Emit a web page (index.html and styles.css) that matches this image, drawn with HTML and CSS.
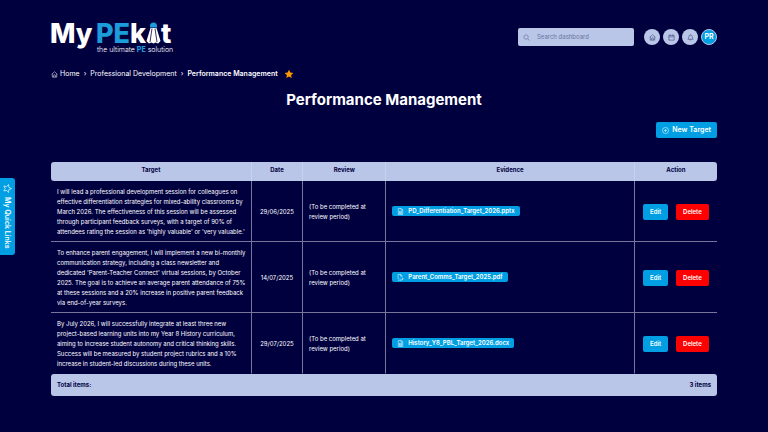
FILE: index.html
```html
<!DOCTYPE html>
<html lang="en">
<head>
    <meta charset="UTF-8">
    <meta name="viewport" content="width=device-width, initial-scale=1.0">
    <title>MyPEkit - Performance Management</title>
    <link rel="stylesheet" href="styles.css">
</head>
<body>
    <!-- Icons shared by the page -->
    <svg class="sprite" aria-hidden="true">
        <symbol id="icon-home" viewBox="0 0 16 16">
            <path d="M1.5 7.5 8 1.8l6.500 5.700M3 6.500V14h10V6.500M6 14v-3.500a2 2 0 0 1 4 0V14"/>
        </symbol>
        <symbol id="icon-star" viewBox="0 0 16 16">
            <path d="M8 1l2.100 4.600 5 .6-3.700 3.400 1 4.900L8 12.100l-4.400 2.400 1-4.900L.9 6.200l5-.6z"/>
        </symbol>
        <symbol id="icon-file" viewBox="0 0 16 16">
            <path d="M3 1h6.500L13 4.500V15H3zM9.500 1v3.500H13M5.500 7.500h5v5h-5zM5.500 10h5"/>
        </symbol>
        <symbol id="icon-pdf" viewBox="0 0 16 16">
            <path d="M2.500 12V1H8l3.500 3.500V8M8 1v3.500h3.500M2.500 14.500h3M7 10.500v4M7 14.500h3M11.500 14.500v-4H15M11.500 12.500H14"/>
        </symbol>
    </svg>

    <a href="#" class="quick-links">
        <svg class="icon"><use href="#icon-star"/></svg>
        <span>My Quick Links</span>
    </a>

    <div class="page">
        <header class="topbar">
            <a href="#" class="logo" aria-label="MyPEkit home">
                <svg viewBox="0 0 122 32" class="logo-img">
                    <text x="-1" y="20" class="logo-name">My</text>
                    <text x="45" y="20" class="logo-name logo-blue">PE</text>
                    <text x="79" y="20" class="logo-name">k</text>
                    <text x="110" y="20" class="logo-name">t</text>
                    <path class="logo-blue" d="M99 3a3.500 3.500 0 0 1 7 0v1.500h-7z"/>
                    <path class="logo-white" d="M99.500 5h6l4 13-2.500 2.500-2.200-1-2.300 1-2.300-1-2.200 1-2.500-2.500z"/>
                    <path class="logo-lines" d="M101 5.500 99 19M104 5.500 106 19"/>
                    <text x="46" y="29" class="logo-tagline">the ultimate <tspan class="logo-blue logo-pe">PE</tspan> solution</text>
                </svg>
            </a>
            <div class="tools">
                <label class="search">
                    <svg class="icon" viewBox="0 0 16 16"><circle cx="7" cy="7" r="5"/><path d="M11 11l4 4"/></svg>
                    <input type="search" placeholder="Search dashboard" aria-label="Search dashboard">
                </label>
                <button type="button" class="round-btn" aria-label="Home">
                    <svg class="icon"><use href="#icon-home"/></svg>
                </button>
                <button type="button" class="round-btn" aria-label="Calendar">
                    <svg class="icon" viewBox="0 0 16 16"><path d="M2 3h12v11H2zM2 6.500h12M5 1v3.500M11 1v3.500"/></svg>
                </button>
                <button type="button" class="round-btn" aria-label="Notifications">
                    <svg class="icon" viewBox="0 0 16 16"><path d="M2 12c1.500-1.500 2-3 2-5.500a4 4 0 0 1 8 0c0 2.500.5 4 2 5.500zM6.500 12.500a1.500 1.500 0 0 0 3 0M8 1v1.500"/></svg>
                </button>
                <button type="button" class="round-btn avatar">PR</button>
            </div>
        </header>

        <nav class="breadcrumb" aria-label="Breadcrumb">
            <a href="#" class="home-link"><svg class="icon"><use href="#icon-home"/></svg>Home</a>
            <span class="sep">›</span>
            <a href="#">Professional Development</a>
            <span class="sep">›</span>
            <strong>Performance Management</strong>
            <svg class="icon favourite"><use href="#icon-star"/></svg>
        </nav>

        <h1>Performance Management</h1>

        <div class="actions-bar">
            <button type="button" class="btn btn-new">
                <svg class="icon" viewBox="0 0 16 16"><circle cx="8" cy="8" r="7"/><path d="M8 4.500v7M4.500 8h7"/></svg>
                New Target
            </button>
        </div>

        <table class="targets">
            <colgroup>
                <col class="col-target">
                <col class="col-date">
                <col class="col-review">
                <col class="col-evidence">
                <col class="col-action">
            </colgroup>
            <thead>
                <tr>
                    <th>Target</th>
                    <th>Date</th>
                    <th>Review</th>
                    <th>Evidence</th>
                    <th>Action</th>
                </tr>
            </thead>
            <tbody>
                <tr>
                    <td>I will lead a professional development session for colleagues on<br>
                        effective differentiation strategies for mixed-ability classrooms by<br>
                        March 2026. The effectiveness of this session will be assessed<br>
                        through participant feedback surveys, with a target of 90% of<br>
                        attendees rating the session as 'highly valuable' or 'very valuable.'</td>
                    <td class="date">29/06/2025</td>
                    <td>(To be completed at<br>review period)</td>
                    <td><a href="#" class="file"><svg class="icon"><use href="#icon-file"/></svg>PD_Differentiation_Target_2026.pptx</a></td>
                    <td>
                        <div class="row-actions">
                            <button type="button" class="btn">Edit</button>
                            <button type="button" class="btn btn-delete">Delete</button>
                        </div>
                    </td>
                </tr>
                <tr>
                    <td>To enhance parent engagement, I will implement a new bi-monthly<br>
                        communication strategy, including a class newsletter and<br>
                        dedicated 'Parent-Teacher Connect' virtual sessions, by October<br>
                        2025. The goal is to achieve an average parent attendance of 75%<br>
                        at these sessions and a 20% increase in positive parent feedback<br>
                        via end-of-year surveys.</td>
                    <td class="date">14/07/2025</td>
                    <td>(To be completed at<br>review period)</td>
                    <td><a href="#" class="file"><svg class="icon"><use href="#icon-pdf"/></svg>Parent_Comms_Target_2025.pdf</a></td>
                    <td>
                        <div class="row-actions">
                            <button type="button" class="btn">Edit</button>
                            <button type="button" class="btn btn-delete">Delete</button>
                        </div>
                    </td>
                </tr>
                <tr>
                    <td>By July 2026, I will successfully integrate at least three new<br>
                        project-based learning units into my Year 8 History curriculum,<br>
                        aiming to increase student autonomy and critical thinking skills.<br>
                        Success will be measured by student project rubrics and a 10%<br>
                        increase in student-led discussions during these units.</td>
                    <td class="date">29/07/2025</td>
                    <td>(To be completed at<br>review period)</td>
                    <td><a href="#" class="file"><svg class="icon"><use href="#icon-file"/></svg>History_Y8_PBL_Target_2026.docx</a></td>
                    <td>
                        <div class="row-actions">
                            <button type="button" class="btn">Edit</button>
                            <button type="button" class="btn btn-delete">Delete</button>
                        </div>
                    </td>
                </tr>
            </tbody>
            <tfoot>
                <tr>
                    <td colspan="4">Total items:</td>
                    <td class="count">3 items</td>
                </tr>
            </tfoot>
        </table>
    </div>
</body>
</html>
```
FILE: styles.css
```css
:root {
    --navy: #01003f;
    --pale: #b9c6e8;
    --blue: #009fe3;
    --line: #77769a;
}

* {
    box-sizing: border-box;
}

body {
    margin: 0;
    background: var(--navy);
    color: #fff;
    font-family: Inter, "Open Sans", sans-serif;
    font-size: 6px;
    line-height: 10px;
}

a {
    color: inherit;
    text-decoration: none;
}

button,
input {
    font: inherit;
    color: inherit;
    border: 0;
    padding: 0;
}

.sprite {
    display: none;
}

.icon {
    width: 7px;
    height: 7px;
    flex: none;
    fill: none;
    stroke: currentColor;
    stroke-width: 1.2;
    stroke-linejoin: round;
}

.page {
    padding: 23px 51px;
}

/* Side tab */
.quick-links {
    position: fixed;
    left: 0;
    top: 178px;
    display: flex;
    align-items: center;
    gap: 4px;
    padding: 6px 3px 6px 2px;
    border-radius: 0 3px 3px 0;
    background: var(--blue);
    font-size: 7px;
    font-weight: 600;
    writing-mode: vertical-rl;
}

.quick-links .icon {
    width: 9px;
    height: 9px;
    transform: rotate(90deg);
}

/* Header */
.topbar {
    display: flex;
    justify-content: space-between;
}

.logo-img {
    display: block;
    width: 122px;
    height: 32px;
    overflow: visible;
    fill: #fff;
}

.logo-name {
    font-size: 27px;
    font-weight: 800;
}

.logo-tagline {
    font-size: 7px;
    font-weight: 300;
}

.logo-pe {
    font-weight: 800;
}

.logo-blue {
    fill: #1b9ddb;
}

.logo-lines {
    fill: none;
    stroke: var(--navy);
    stroke-width: 0.8;
}

.tools {
    display: flex;
    align-items: center;
    gap: 3px;
    height: 28px;
}

.search {
    display: flex;
    align-items: center;
    gap: 7px;
    width: 116px;
    height: 18px;
    margin-right: 7px;
    padding: 0 5px;
    border-radius: 2px;
    background: var(--pale);
    color: #55608c;
}

.search input {
    width: 100%;
    background: none;
    outline: 0;
}

.search input::placeholder {
    color: #6a749c;
    opacity: 1;
}

.round-btn {
    display: flex;
    align-items: center;
    justify-content: center;
    width: 16px;
    height: 16px;
    border-radius: 50%;
    background: var(--pale);
    color: #34386c;
}

.avatar {
    border: 1px solid var(--pale);
    background: var(--blue);
    color: #fff;
    font-size: 7px;
    font-weight: 700;
}

/* Breadcrumb and title */
.breadcrumb {
    display: flex;
    align-items: center;
    gap: 4px;
    margin-top: 14px;
    font-size: 7px;
}

.breadcrumb strong {
    font-weight: 600;
}

.home-link {
    display: flex;
    align-items: center;
    gap: 2px;
}

.favourite {
    width: 10px;
    height: 10px;
    margin-left: 2px;
    fill: #f90;
    stroke: none;
}

h1 {
    margin: 13px 0 14px;
    font-size: 15px;
    line-height: 16px;
    font-weight: 700;
    text-align: center;
}

/* Buttons */
.btn {
    height: 16px;
    padding: 0 7px;
    border-radius: 2px;
    background: var(--blue);
    color: #fff;
    font-weight: 600;
    cursor: pointer;
}

.btn-new {
    display: flex;
    align-items: center;
    gap: 3px;
    padding: 0 6px;
    font-size: 7px;
}

.btn-delete {
    background: #f00;
}

.actions-bar {
    display: flex;
    justify-content: flex-end;
    margin-bottom: 24px;
}

/* Targets table */
.targets {
    width: 100%;
    table-layout: fixed;
    border-collapse: separate;
    border-spacing: 0;
}

.col-target {
    width: 30%;
}

.col-date {
    width: 7.7%;
}

.col-review,
.col-action {
    width: 12.5%;
}

.targets th {
    padding: 3px 6px 6px;
    background: var(--pale);
    color: var(--navy);
    font-weight: 700;
}

.targets td {
    padding: 6px 6px 4px;
    white-space: nowrap;
}

.targets th + th,
.targets tbody td + td {
    border-left: 1px solid var(--line);
}

.targets th + th {
    border-color: #c8d2ee;
}

.targets tbody td {
    border-bottom: 1px solid var(--line);
}

.targets tbody tr:last-child td {
    border-bottom-color: transparent;
}

.targets tbody .date {
    padding-left: 0;
    padding-right: 0;
    text-align: center;
}

.targets tfoot td {
    padding: 6px;
    background: var(--pale);
    color: var(--navy);
    font-weight: 700;
}

.targets .count {
    text-align: right;
}

.targets th:first-child,
.targets tfoot td:first-child {
    border-radius: 3px 0 0 3px;
}

.targets th:last-child,
.targets tfoot td:last-child {
    border-radius: 0 3px 3px 0;
}

.file {
    display: inline-flex;
    align-items: center;
    gap: 4px;
    padding: 0 5px;
    border-radius: 2px;
    background: var(--blue);
    font-weight: 600;
}

.row-actions {
    display: flex;
    justify-content: center;
    gap: 8px;
}
```
